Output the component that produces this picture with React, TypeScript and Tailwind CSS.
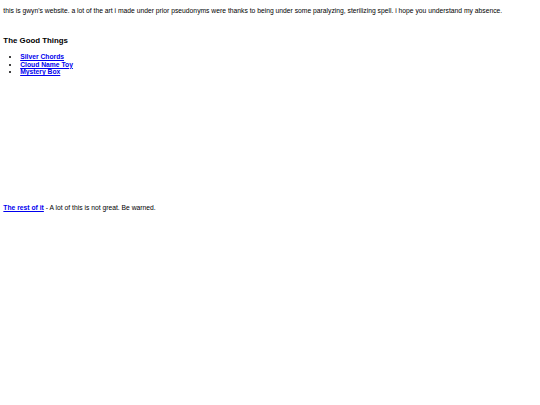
import React from "react";

export default function App() {
  return (
    <div
      className="min-h-[405px] bg-white px-[3.36px] pt-[6.72px] text-black"
      style={{ fontFamily: '"Liberation Sans", Arial, sans-serif' }}
    >
      <p className="m-0 text-[6.76px] leading-[7.72px]">
        this is gwyn's website. a lot of the art i made under prior pseudonyms were thanks to being under some paralyzing, sterilizing spell. i hope you understand my absence.
      </p>
      <h3 className="mt-[21.56px] text-[7.86px] font-bold leading-[9.03px]">The Good Things</h3>
      <ul className="mt-[7.86px] list-disc pl-[16.8px] text-[6.76px] leading-[7.72px]">
        <li>
          <a href="#" className="font-bold text-[#0000ee] underline">Silver Chords</a>
        </li>
        <li>
          <a href="#" className="font-bold text-[#0000ee] underline">Cloud Name Toy</a>
        </li>
        <li>
          <a href="#" className="font-bold text-[#0000ee] underline">Mystery Box</a>
        </li>
      </ul>
      <p className="mt-[127.8px] text-[6.76px] leading-[7.72px]">
        <a href="#" className="font-bold text-[#0000ee] underline">The rest of it</a> - A lot of this is not great. Be warned.
      </p>
    </div>
  );
}
